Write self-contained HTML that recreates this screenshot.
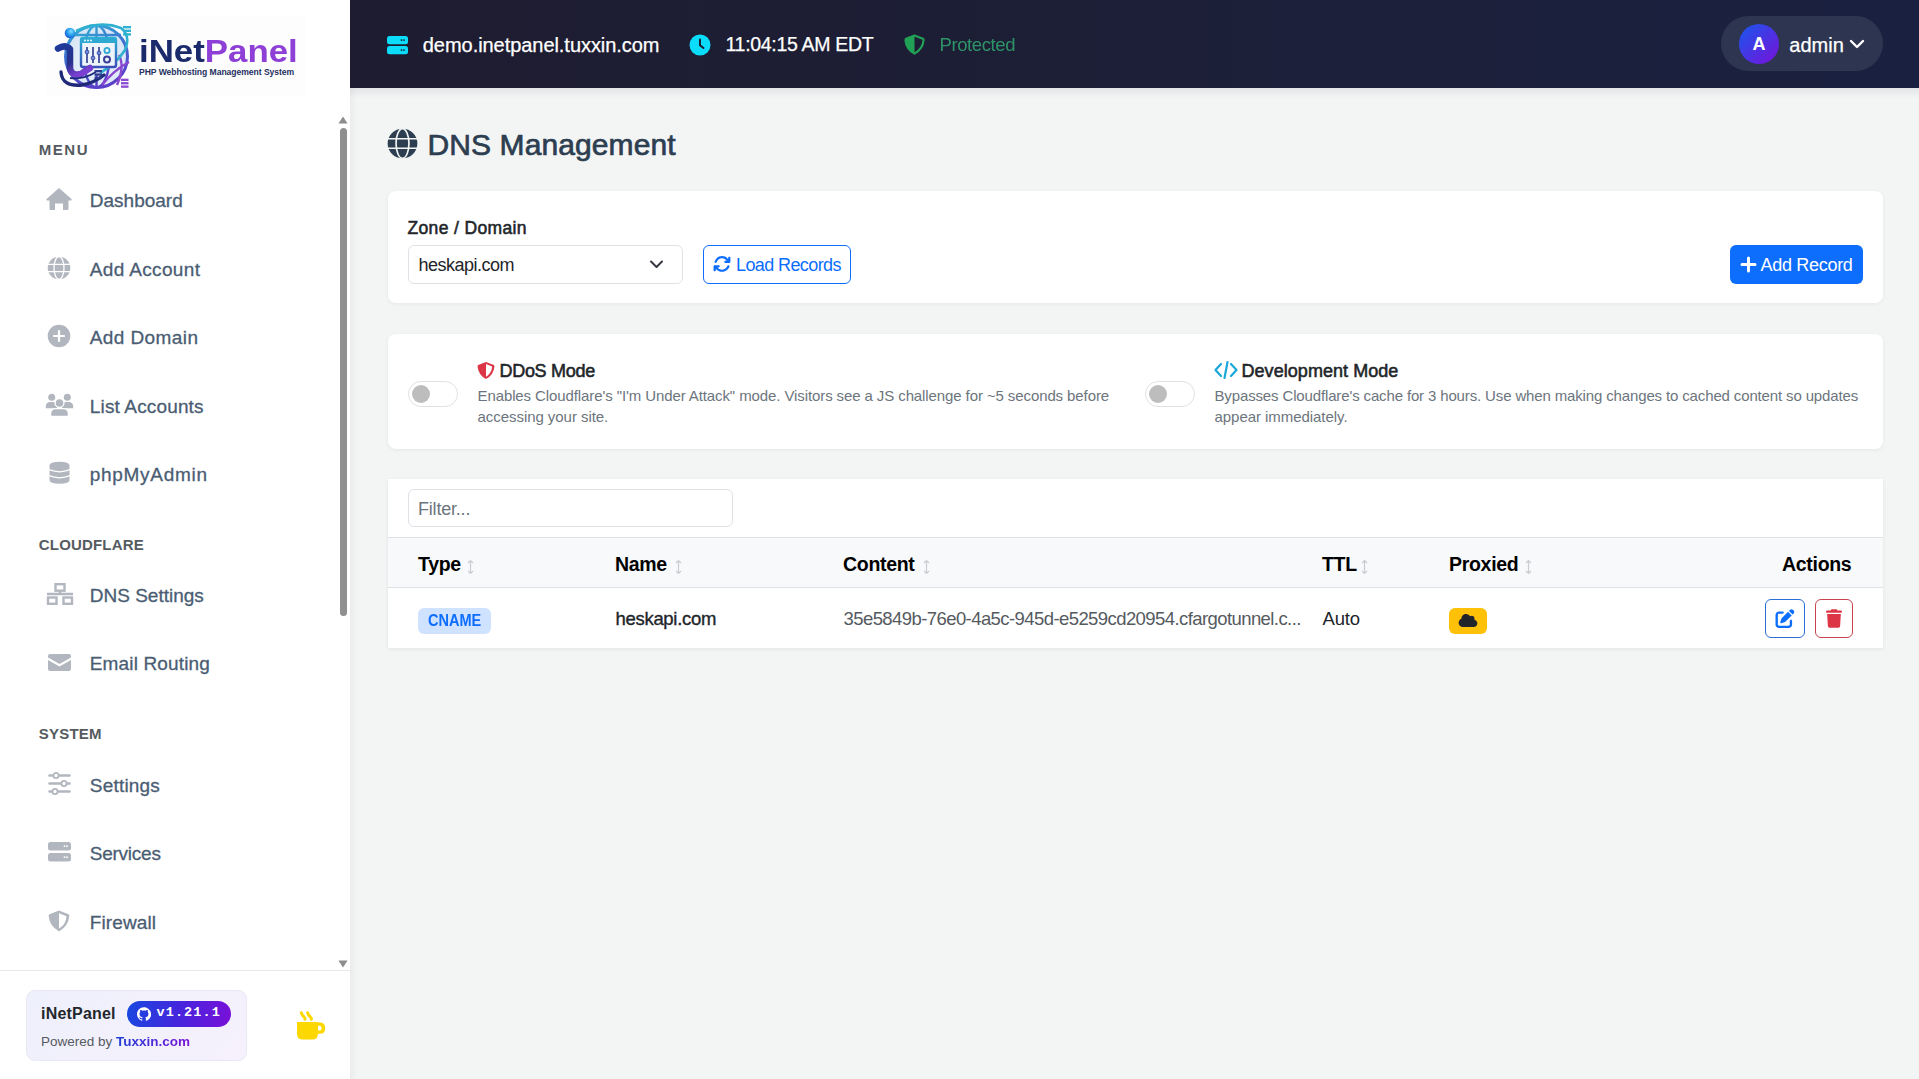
<!DOCTYPE html>
<html><head><meta charset="utf-8"><title>iNetPanel - DNS Management</title>
<style>
html,body{margin:0;padding:0;}
body{width:1919px;height:1079px;overflow:hidden;position:relative;background:#f3f4f4;font-family:"Liberation Sans",sans-serif;}
.a{position:absolute;display:block;}
.t{position:absolute;white-space:nowrap;line-height:1;}
</style></head><body>
<div class="a" style="left:0px;top:0px;width:350px;height:1079px;background:#ffffff;"></div>
<div class="a" style="left:47px;top:16px;width:258px;height:80px;background:#fdfdfe;"></div>
<svg class="a" style="left:50px;top:15px;" width="90" height="80" viewBox="0 0 90 80">
<defs>
<linearGradient id="gRing" x1="0" y1="0" x2="0.3" y2="1"><stop offset="0" stop-color="#2fb6d6"/><stop offset="0.5" stop-color="#3f6fd0"/><stop offset="1" stop-color="#5a3fc8"/></linearGradient>
<linearGradient id="gI" x1="0" y1="0" x2="0.6" y2="1"><stop offset="0" stop-color="#1f3a9a"/><stop offset="0.6" stop-color="#28318a"/><stop offset="1" stop-color="#7a3fd0"/></linearGradient>
<linearGradient id="gWin" x1="0" y1="0" x2="0" y2="1"><stop offset="0" stop-color="#2bb0d4"/><stop offset="1" stop-color="#3a4fb8"/></linearGradient>
<radialGradient id="gFill" cx="0.5" cy="0.55" r="0.55"><stop offset="0" stop-color="#f2f7fd"/><stop offset="1" stop-color="#c6dbf2"/></radialGradient>
<radialGradient id="gDot" cx="0.6" cy="0.35" r="0.7"><stop offset="0" stop-color="#7fe0ff"/><stop offset="0.5" stop-color="#2a9ef0"/><stop offset="1" stop-color="#1a55d0"/></radialGradient>
</defs>
<circle cx="46.5" cy="41.5" r="31" fill="url(#gFill)" opacity="0.75"/>
<circle cx="46.5" cy="41.5" r="31" fill="none" stroke="url(#gRing)" stroke-width="3"/>
<ellipse cx="46.5" cy="41.5" rx="13" ry="31" fill="none" stroke="url(#gRing)" stroke-width="2.4"/>
<path d="M46.5 10.5 V22 M22 20 H71 M46.5 60 V72.5" stroke="url(#gRing)" stroke-width="2.4" fill="none"/>
<path d="M69 40 Q75 52 67 70 M79 47 Q64 55 52 70" stroke="#8a48d0" stroke-width="2.4" fill="none"/>
<path d="M26 16 Q50 5 71 13 Q81 21 75 35 Q66 49 50 58" stroke="#2fb0d0" stroke-width="2.6" fill="none"/>
<rect x="31" y="23" width="35" height="29" rx="2" fill="#eef4fb" stroke="url(#gWin)" stroke-width="2.4"/>
<rect x="31" y="23" width="35" height="5" fill="#2fa8d2"/>
<circle cx="35" cy="25.5" r="0.9" fill="#fff"/><circle cx="38" cy="25.5" r="0.9" fill="#fff"/><circle cx="41" cy="25.5" r="0.9" fill="#fff"/>
<path d="M37 32 V48 M43 32 V48 M49 32 V48" stroke="#2c3a8e" stroke-width="1.6"/>
<circle cx="37" cy="37" r="1.9" fill="#6f8fe0" stroke="#2c3a8e" stroke-width="0.8"/><circle cx="43" cy="43" r="1.9" fill="#6f8fe0" stroke="#2c3a8e" stroke-width="0.8"/><circle cx="49" cy="38" r="1.9" fill="#6f8fe0" stroke="#2c3a8e" stroke-width="0.8"/>
<circle cx="57" cy="35.5" r="2.6" fill="none" stroke="#2fa8d2" stroke-width="1.8"/><circle cx="57" cy="44.5" r="3" fill="none" stroke="#3a3f9a" stroke-width="2"/>
<path d="M8 33.5 Q15 29 20 34 V53 Q21 61 31 59 L40 53" stroke="url(#gI)" stroke-width="6.5" fill="none" stroke-linecap="round" stroke-linejoin="round"/>
<path d="M11 57 Q12 72 32 70 Q44 68 54 60" stroke="#1e2a78" stroke-width="3.4" fill="none" stroke-linecap="round"/>
<path d="M20 63 Q33 65 46 57" stroke="#1e2a78" stroke-width="1.8" fill="none"/>
<circle cx="20" cy="18" r="5.3" fill="url(#gDot)"/>
<rect x="73" y="11" width="8" height="2.4" fill="#31b2d2"/><rect x="73" y="14.6" width="8" height="2.4" fill="#31b2d2"/><rect x="73" y="18.2" width="8" height="2.4" fill="#31b2d2"/>
<rect x="44.5" y="55" width="7.5" height="2.3" fill="#2c3a8e"/><rect x="44.5" y="58.4" width="7.5" height="2.3" fill="#2c3a8e"/><rect x="44.5" y="61.8" width="7.5" height="2.3" fill="#2c3a8e"/>
<rect x="71" y="63.7" width="7.5" height="2.3" fill="#8a4ad0"/><rect x="71" y="67.1" width="7.5" height="2.3" fill="#8a4ad0"/><rect x="71" y="70.5" width="7.5" height="2.3" fill="#8a4ad0"/>
</svg>
<div class="t logo" style="left:139.00px;top:36.26px;font-size:31px;color:#1b2a6b;font-weight:700;transform:scaleX(1.124);transform-origin:0 0;"><span style="color:#1b2a6b">iNet</span><span style="color:#8e3fd6">Panel</span></div>
<div class="t" style="left:139.00px;top:67.72px;font-size:8.6px;color:#26305e;font-weight:700;letter-spacing:-0.05px;">PHP Webhosting Management System</div>
<div class="t" style="left:38.80px;top:142.30px;font-size:15px;color:#555b61;font-weight:700;letter-spacing:1.5px;">MENU</div>
<div class="t" style="left:38.80px;top:536.60px;font-size:15px;color:#555b61;font-weight:700;letter-spacing:0.18px;">CLOUDFLARE</div>
<div class="t" style="left:38.80px;top:725.50px;font-size:15px;color:#555b61;font-weight:700;letter-spacing:0.2px;">SYSTEM</div>
<div class="t" style="left:89.80px;top:190.92px;font-size:19px;color:#4a5d73;-webkit-text-stroke:0.3px #4a5d73;">Dashboard</div>
<svg class="a" style="left:46px;top:187px;" width="26" height="24" viewBox="0 0 26 24"><path d="M13 1 L25.5 12 Q26 13 25 13.5 L22.5 13.5 V22 Q22.5 23 21.5 23 H17 V16.5 H9 V23 H4.5 Q3.5 23 3.5 22 V13.5 H1 Q0 13 0.5 12 Z" fill="#b2b7bf"/></svg>
<div class="t" style="left:89.80px;top:259.72px;font-size:19px;color:#4a5d73;letter-spacing:0.35px;-webkit-text-stroke:0.3px #4a5d73;">Add Account</div>
<svg class="a" style="left:47px;top:256px;" width="24" height="24" viewBox="0 0 24 24"><circle cx="12" cy="12" r="11.3" fill="#b2b7bf"/><ellipse cx="12" cy="12" rx="5" ry="11.3" fill="none" stroke="#fff" stroke-width="1.3"/><path d="M0.5 8.3 H23.5 M0.5 15.7 H23.5" stroke="#fff" stroke-width="1.3"/></svg>
<div class="t" style="left:89.80px;top:327.72px;font-size:19px;color:#4a5d73;letter-spacing:0.4px;-webkit-text-stroke:0.3px #4a5d73;">Add Domain</div>
<svg class="a" style="left:47px;top:324px;" width="24" height="24" viewBox="0 0 24 24"><circle cx="12" cy="12" r="11.3" fill="#b2b7bf"/><path d="M12 7 V17 M7 12 H17" stroke="#fff" stroke-width="2.2" stroke-linecap="round"/></svg>
<div class="t" style="left:89.80px;top:396.72px;font-size:19px;color:#4a5d73;letter-spacing:0.15px;-webkit-text-stroke:0.3px #4a5d73;">List Accounts</div>
<svg class="a" style="left:45px;top:393px;" width="29" height="24" viewBox="0 0 29 24"><circle cx="6.7" cy="4.2" r="3.5" fill="#b2b7bf"/><circle cx="22.3" cy="4.2" r="3.5" fill="#b2b7bf"/><path d="M0.8 15.2 V13.5 Q0.8 9 5.5 9 H8 Q11 9 12 12 V15.2 Z M28.2 15.2 V13.5 Q28.2 9 23.5 9 H21 Q18 9 17 12 V15.2 Z" fill="#b2b7bf"/><circle cx="14.5" cy="10" r="4.4" fill="#b2b7bf" stroke="#fff" stroke-width="1.3"/><path d="M5.6 23.5 V20.8 Q5.6 15.6 10.8 15.6 H18.2 Q23.4 15.6 23.4 20.8 V23.5 Z" fill="#b2b7bf" stroke="#fff" stroke-width="1.3"/></svg>
<div class="t" style="left:89.80px;top:464.92px;font-size:19px;color:#4a5d73;letter-spacing:0.7px;-webkit-text-stroke:0.3px #4a5d73;">phpMyAdmin</div>
<svg class="a" style="left:49px;top:461px;" width="21" height="23" viewBox="0 0 21 23"><path d="M0.5 4.6 Q0.5 0.8 10.5 0.8 Q20.5 0.8 20.5 4.6 V19 Q20.5 22.8 10.5 22.8 Q0.5 22.8 0.5 19 Z" fill="#b2b7bf"/><path d="M0 8.6 Q10.5 13 21 8.6 M0 14.6 Q10.5 19 21 14.6" stroke="#fff" stroke-width="1.3" fill="none"/></svg>
<div class="t" style="left:89.80px;top:585.82px;font-size:19px;color:#4a5d73;-webkit-text-stroke:0.3px #4a5d73;">DNS Settings</div>
<svg class="a" style="left:46px;top:583px;" width="28" height="22" viewBox="0 0 28 22"><rect x="9.5" y="1.2" width="9" height="6.5" fill="none" stroke="#b2b7bf" stroke-width="2.4"/><path d="M14 7.7 V11 M1 11 H27" stroke="#b2b7bf" stroke-width="2.4"/><rect x="2" y="14.5" width="8.5" height="6.3" fill="none" stroke="#b2b7bf" stroke-width="2.4"/><rect x="17.5" y="14.5" width="8.5" height="6.3" fill="none" stroke="#b2b7bf" stroke-width="2.4"/></svg>
<div class="t" style="left:89.80px;top:654.42px;font-size:19px;color:#4a5d73;letter-spacing:0.15px;-webkit-text-stroke:0.3px #4a5d73;">Email Routing</div>
<svg class="a" style="left:48px;top:654px;" width="23" height="17" viewBox="0 0 23 17"><path d="M2 0 H21 Q23 0 23 2 V3.5 L11.5 10 L0 3.5 V2 Q0 0 2 0 Z M0 6 L11.5 12.5 L23 6 V15 Q23 17 21 17 H2 Q0 17 0 15 Z" fill="#b2b7bf"/></svg>
<div class="t" style="left:89.80px;top:775.72px;font-size:19px;color:#4a5d73;letter-spacing:0.2px;-webkit-text-stroke:0.3px #4a5d73;">Settings</div>
<svg class="a" style="left:48px;top:772px;" width="24" height="23" viewBox="0 0 24 23"><path d="M1.5 3.5 H21.5 M1.5 11.5 H21.5 M1.5 19.5 H21.5" stroke="#b2b7bf" stroke-width="2.6" stroke-linecap="round"/><circle cx="8" cy="3.5" r="2.6" fill="#fff" stroke="#b2b7bf" stroke-width="1.8"/><circle cx="16" cy="11.5" r="2.6" fill="#fff" stroke="#b2b7bf" stroke-width="1.8"/><circle cx="7" cy="19.5" r="2.6" fill="#fff" stroke="#b2b7bf" stroke-width="1.8"/></svg>
<div class="t" style="left:89.80px;top:844.22px;font-size:19px;color:#4a5d73;letter-spacing:-0.25px;-webkit-text-stroke:0.3px #4a5d73;">Services</div>
<svg class="a" style="left:48px;top:842px;" width="23" height="20" viewBox="0 0 23 20"><rect x="0" y="0" width="23" height="8.5" rx="2.5" fill="#b2b7bf"/><rect x="0" y="11" width="23" height="8.5" rx="2.5" fill="#b2b7bf"/><circle cx="16.5" cy="4.2" r="0.9" fill="#fff"/><circle cx="19" cy="4.2" r="0.9" fill="#fff"/><circle cx="16.5" cy="15.2" r="0.9" fill="#fff"/><circle cx="19" cy="15.2" r="0.9" fill="#fff"/></svg>
<div class="t" style="left:89.80px;top:912.92px;font-size:19px;color:#4a5d73;letter-spacing:0.1px;-webkit-text-stroke:0.3px #4a5d73;">Firewall</div>
<svg class="a" style="left:48px;top:910px;" width="22" height="22" viewBox="0 0 22 22"><path d="M11 0.5 L20.5 4.3 Q21.5 4.8 21.3 6 Q20.5 16 11 21.5 Q1.5 16 0.7 6 Q0.5 4.8 1.5 4.3 Z" fill="#b2b7bf"/><path d="M11 3.2 L18.5 6.2 Q18 14.5 11 18.6 Z" fill="#fff"/></svg>
<svg class="a" style="left:338px;top:116px;" width="10" height="8" viewBox="0 0 10 8"><path d="M5 0.5 L9.5 7.5 H0.5 Z" fill="#8c8c8c"/></svg>
<div class="a" style="left:340px;top:128px;width:7px;height:488px;background:#8f8f8f;border-radius:4px;"></div>
<svg class="a" style="left:338px;top:960px;" width="10" height="8" viewBox="0 0 10 8"><path d="M0.5 0.5 H9.5 L5 7.5 Z" fill="#8c8c8c"/></svg>
<div class="a" style="left:0px;top:970px;width:350px;height:1px;background:#e6e8eb;"></div>
<div class="a" style="left:26px;top:990px;width:221px;height:71px;background:linear-gradient(135deg,#eef0fc,#f6f1fc);border:1px solid #e9e8f6;border-radius:9px;box-sizing:border-box;"></div>
<div class="t" style="left:41.00px;top:1005.96px;font-size:16px;color:#23272b;font-weight:700;letter-spacing:0.2px;">iNetPanel</div>
<div class="a" style="left:127px;top:1001px;width:104px;height:26px;background:linear-gradient(100deg,#1848e0,#4a22dc 55%,#7a10d8);border-radius:13px;"></div>
<svg class="a" style="left:137px;top:1006.5px;" width="14" height="14" viewBox="0 0 16 16"><path fill="#fff" d="M8 0.2C3.6 0.2 0 3.8 0 8.2c0 3.5 2.3 6.5 5.5 7.6.4.1.5-.2.5-.4v-1.4c-2.2.5-2.7-1-2.7-1-.4-.9-.9-1.2-.9-1.2-.7-.5.1-.5.1-.5.8.1 1.2.8 1.2.8.7 1.2 1.9.9 2.3.7.1-.5.3-.9.5-1.1-1.8-.2-3.6-.9-3.6-4 0-.9.3-1.6.8-2.1-.1-.2-.4-1 .1-2.1 0 0 .7-.2 2.2.8.6-.2 1.3-.3 2-.3s1.4.1 2 .3c1.5-1 2.2-.8 2.2-.8.4 1.1.2 1.9.1 2.1.5.6.8 1.3.8 2.1 0 3.1-1.9 3.8-3.6 4 .3.3.6.8.6 1.5v2.2c0 .2.1.5.6.4 3.2-1.1 5.5-4.1 5.5-7.6C16 3.8 12.4 0.2 8 0.2z"/></svg>
<div class="t" style="left:156.50px;top:1005.57px;font-size:13.5px;color:#ffffff;font-weight:700;letter-spacing:1.1px;font-family:'Liberation Mono',monospace;">v1.21.1</div>
<div class="t" style="left:41.00px;top:1034.57px;font-size:13.5px;color:#555a60;">Powered by <b style="background:linear-gradient(90deg,#1d3fd8,#7a14d6);-webkit-background-clip:text;background-clip:text;color:transparent">Tuxxin.com</b></div>
<svg class="a" style="left:285px;top:1000px;" width="50" height="50" viewBox="0 0 50 50"><path d="M16.3 12.8 Q16.8 15.2 19.3 17.2 Q20.3 18.2 20 19.2 M22.6 12.8 Q23.1 15.2 25.6 17.2 Q26.6 18.2 26.3 19.2" stroke="#fcd800" stroke-width="3" fill="none" stroke-linecap="round"/><path d="M12 22 H33 V34 Q33 39.6 27.4 39.6 H17.6 Q12 39.6 12 34 Z" fill="#fcd800"/><path d="M32 22.5 H35 Q40.2 22.5 40.2 28.2 Q40.2 33.8 35 33.8 H32 V30.6 H34.6 Q36.6 30.6 36.6 28.2 Q36.6 25.7 34.6 25.7 H32 Z" fill="#fcd800"/></svg>
<div class="a" style="left:350px;top:0px;width:1569px;height:88px;background:linear-gradient(90deg,#1e1c30 0%,#1c1f38 55%,#1a2140 100%);"></div>
<div class="a" style="left:350px;top:88px;width:1569px;height:10px;background:linear-gradient(#e2e5e6,rgba(243,244,244,0));"></div>
<div class="a" style="left:350px;top:88px;width:7px;height:991px;background:linear-gradient(90deg,rgba(0,0,0,0.035),rgba(0,0,0,0));"></div>
<svg class="a" style="left:387px;top:35.6px;" width="21" height="19" viewBox="0 0 21 19"><rect x="0" y="0" width="21" height="8.3" rx="2.5" fill="#0adcfa"/><rect x="0" y="10" width="21" height="8.3" rx="2.5" fill="#0adcfa"/><circle cx="14.5" cy="4.1" r="0.9" fill="#1e1c30"/><circle cx="17" cy="4.1" r="0.9" fill="#1e1c30"/><circle cx="14.5" cy="14.1" r="0.9" fill="#1e1c30"/><circle cx="17" cy="14.1" r="0.9" fill="#1e1c30"/></svg>
<div class="t" style="left:422.80px;top:35.07px;font-size:20px;color:#ffffff;letter-spacing:-0.05px;-webkit-text-stroke:0.25px #fff;">demo.inetpanel.tuxxin.com</div>
<svg class="a" style="left:689px;top:34px;" width="22" height="22" viewBox="0 0 22 22"><circle cx="11" cy="11" r="10.5" fill="#0adcfa"/><path d="M11 5.5 V11.3 L14.5 14" stroke="#1e1c30" stroke-width="2" fill="none" stroke-linecap="round"/></svg>
<div class="t" style="left:725.50px;top:35.49px;font-size:19.5px;color:#ffffff;letter-spacing:-0.3px;-webkit-text-stroke:0.25px #fff;">11:04:15 AM EDT</div>
<svg class="a" style="left:904px;top:34px;" width="21" height="21" viewBox="0 0 22 22"><path d="M11 1.5 L19.8 5 Q20.6 5.4 20.5 6.4 Q19.7 15.6 11 20.6 Q2.3 15.6 1.5 6.4 Q1.4 5.4 2.2 5 Z" fill="none" stroke="#21a155" stroke-width="2.2" stroke-linejoin="round"/><path d="M11 1.5 V20.6 Q2.3 15.6 1.5 6.4 Q1.4 5.4 2.2 5 Z" fill="#21a155"/></svg>
<div class="t" style="left:939.50px;top:36.34px;font-size:18.5px;color:#30a06c;letter-spacing:-0.4px;opacity:0.9;">Protected</div>
<div class="a" style="left:1721px;top:16px;width:162px;height:55px;background:#2e3550;border-radius:28px;"></div>
<div class="a" style="left:1739px;top:24px;width:40px;height:40px;background:linear-gradient(135deg,#1658ee,#7a10d8);border-radius:50%;"></div>
<div class="t" style="left:1752.50px;top:34.86px;font-size:18px;color:#ffffff;font-weight:700;">A</div>
<div class="t" style="left:1789.30px;top:34.77px;font-size:20px;color:#ffffff;-webkit-text-stroke:0.25px #fff;">admin</div>
<svg class="a" style="left:1849px;top:39px;" width="16" height="11" viewBox="0 0 16 11"><path d="M2 2 L8 8 L14 2" stroke="#fff" stroke-width="2.4" fill="none" stroke-linecap="round" stroke-linejoin="round"/></svg>
<svg class="a" style="left:387px;top:128px;" width="31" height="31" viewBox="0 0 24 24"><circle cx="12" cy="12" r="11.5" fill="#2c3e50"/><ellipse cx="12" cy="12" rx="5" ry="11.5" fill="none" stroke="#f3f4f4" stroke-width="1.3"/><path d="M0.5 8.3 H23.5 M0.5 15.7 H23.5" stroke="#f3f4f4" stroke-width="1.3"/></svg>
<div class="t" style="left:427.50px;top:129.80px;font-size:30px;color:#2c3e50;letter-spacing:0.1px;-webkit-text-stroke:0.7px #2c3e50;">DNS Management</div>
<div class="a" style="left:388px;top:191px;width:1495px;height:112px;background:#fff;border-radius:8px;box-shadow:0 1px 4px rgba(0,0,0,0.06);"></div>
<div class="t" style="left:407.50px;top:219.69px;font-size:17.5px;color:#212529;letter-spacing:0.35px;-webkit-text-stroke:0.55px #212529;">Zone / Domain</div>
<div class="a" style="left:408px;top:245px;width:275px;height:39px;border:1px solid #dee2e6;border-radius:6px;box-sizing:border-box;background:#fff;"></div>
<div class="t" style="left:418.50px;top:255.76px;font-size:18px;color:#212529;letter-spacing:-0.5px;">heskapi.com</div>
<svg class="a" style="left:649px;top:259px;" width="15" height="11" viewBox="0 0 15 11"><path d="M2 2.5 L7.5 8 L13 2.5" stroke="#343a40" stroke-width="2" fill="none" stroke-linecap="round" stroke-linejoin="round"/></svg>
<div class="a" style="left:703px;top:245px;width:148px;height:39px;border:1px solid #0d6efd;border-radius:6px;box-sizing:border-box;"></div>
<svg class="a" style="left:713px;top:255px;" width="18" height="18" viewBox="0 0 512 512"><path fill="#0d6efd" d="M105.1 202.6c7.7-21.8 20.2-42.3 37.8-59.8c62.5-62.5 163.8-62.5 226.3 0L386.3 160H352c-17.7 0-32 14.3-32 32s14.3 32 32 32H463.5c0 0 0 0 0 0h.4c17.7 0 32-14.3 32-32V80c0-17.7-14.3-32-32-32s-32 14.3-32 32v35.2L414.4 97.6c-87.5-87.5-229.3-87.5-316.8 0C73.2 122 55.6 150.7 44.8 181.4c-5.9 16.7 2.9 34.9 19.5 40.8s34.9-2.9 40.8-19.5zM39 289.3c-5 1.5-9.8 4.2-13.7 8.2c-4 4-6.7 8.8-8.1 14c-.3 1.2-.6 2.5-.8 3.8c-.3 1.7-.4 3.4-.4 5.1V432c0 17.7 14.3 32 32 32s32-14.3 32-32V396.9l17.6 17.5 0 0c87.5 87.4 229.3 87.4 316.7 0c24.4-24.4 42.1-53.1 52.9-83.7c5.9-16.7-2.9-34.9-19.5-40.8s-34.9 2.9-40.8 19.5c-7.7 21.8-20.2 42.3-37.8 59.8c-62.5 62.5-163.8 62.5-226.3 0l-.1-.1L125.6 352H160c17.7 0 32-14.3 32-32s-14.3-32-32-32H48.4c-1.6 0-3.2 .1-4.8 .3s-3.1 .5-4.6 1z"/></svg>
<div class="t" style="left:736.00px;top:255.76px;font-size:18px;color:#0d6efd;letter-spacing:-0.6px;">Load Records</div>
<div class="a" style="left:1730px;top:245px;width:133px;height:39px;background:#0d6efd;border-radius:6px;"></div>
<svg class="a" style="left:1740px;top:256px;" width="17" height="17" viewBox="0 0 17 17"><path d="M8.5 2 V15 M2 8.5 H15" stroke="#fff" stroke-width="3" stroke-linecap="round"/></svg>
<div class="t" style="left:1760.50px;top:255.76px;font-size:18px;color:#ffffff;letter-spacing:-0.3px;">Add Record</div>
<div class="a" style="left:388px;top:334px;width:1495px;height:115px;background:#fff;border-radius:8px;box-shadow:0 1px 4px rgba(0,0,0,0.06);"></div>
<div class="a" style="left:408px;top:381px;width:50px;height:26px;border:1px solid #dee2e6;border-radius:13px;box-sizing:border-box;background:#fff;"></div>
<div class="a" style="left:412px;top:385px;width:18px;height:18px;background:#bdbdbd;border-radius:50%;"></div>
<svg class="a" style="left:477px;top:361px;" width="18" height="19" viewBox="0 0 22 22"><path d="M11 0.5 L20.5 4.3 Q21.5 4.8 21.3 6 Q20.5 16 11 21.5 Q1.5 16 0.7 6 Q0.5 4.8 1.5 4.3 Z" fill="#dc3545"/><path d="M11 3.2 L18.5 6.2 Q18 14.5 11 18.6 Z" fill="#fff"/></svg>
<div class="t" style="left:499.50px;top:362.06px;font-size:18px;color:#212529;letter-spacing:-0.3px;-webkit-text-stroke:0.55px #212529;">DDoS Mode</div>
<div class="t" style="left:477.50px;top:387.80px;font-size:15px;color:#6c757d;letter-spacing:-0.1px;">Enables Cloudflare's "I'm Under Attack" mode. Visitors see a JS challenge for ~5 seconds before</div>
<div class="t" style="left:477.50px;top:409.30px;font-size:15px;color:#6c757d;letter-spacing:-0.05px;">accessing your site.</div>
<div class="a" style="left:1145px;top:381px;width:50px;height:26px;border:1px solid #dee2e6;border-radius:13px;box-sizing:border-box;background:#fff;"></div>
<div class="a" style="left:1149px;top:385px;width:18px;height:18px;background:#bdbdbd;border-radius:50%;"></div>
<svg class="a" style="left:1214px;top:361px;" width="24" height="18" viewBox="0 0 24 18"><path d="M7 3 L1.5 9 L7 15 M17 3 L22.5 9 L17 15 M13.5 1 L10.5 17" stroke="#1ba8d8" stroke-width="2.2" fill="none" stroke-linecap="round" stroke-linejoin="round"/></svg>
<div class="t" style="left:1241.50px;top:362.06px;font-size:18px;color:#212529;letter-spacing:0.05px;-webkit-text-stroke:0.55px #212529;">Development Mode</div>
<div class="t" style="left:1214.50px;top:387.80px;font-size:15px;color:#6c757d;letter-spacing:-0.14px;">Bypasses Cloudflare's cache for 3 hours. Use when making changes to cached content so updates</div>
<div class="t" style="left:1214.50px;top:409.30px;font-size:15px;color:#6c757d;letter-spacing:-0.05px;">appear immediately.</div>
<div class="a" style="left:388px;top:479px;width:1495px;height:169px;background:#fff;box-shadow:0 1px 4px rgba(0,0,0,0.07);"></div>
<div class="a" style="left:408px;top:489px;width:325px;height:38px;border:1px solid #dee2e6;border-radius:6px;box-sizing:border-box;background:#fff;"></div>
<div class="t" style="left:418.00px;top:499.76px;font-size:18px;color:#6c757d;letter-spacing:-0.2px;">Filter...</div>
<div class="a" style="left:388px;top:537px;width:1495px;height:51px;background:#f8f9fa;border-top:1px solid #dee2e6;border-bottom:1px solid #dee2e6;box-sizing:border-box;"></div>
<div class="t" style="left:418.00px;top:554.99px;font-size:19.5px;color:#000000;font-weight:700;letter-spacing:-0.3px;">Type</div>
<svg class="a" style="left:467px;top:559px;" width="7" height="16" viewBox="0 0 7 16"><path d="M3.5 1.5 V14.5 M1 4 L3.5 1.5 L6 4 M1 12 L3.5 14.5 L6 12" stroke="#c9cdd1" stroke-width="1.2" fill="none"/></svg>
<div class="t" style="left:615.00px;top:554.99px;font-size:19.5px;color:#000000;font-weight:700;letter-spacing:-0.3px;">Name</div>
<svg class="a" style="left:675px;top:559px;" width="7" height="16" viewBox="0 0 7 16"><path d="M3.5 1.5 V14.5 M1 4 L3.5 1.5 L6 4 M1 12 L3.5 14.5 L6 12" stroke="#c9cdd1" stroke-width="1.2" fill="none"/></svg>
<div class="t" style="left:843.00px;top:554.99px;font-size:19.5px;color:#000000;font-weight:700;letter-spacing:-0.3px;">Content</div>
<svg class="a" style="left:923px;top:559px;" width="7" height="16" viewBox="0 0 7 16"><path d="M3.5 1.5 V14.5 M1 4 L3.5 1.5 L6 4 M1 12 L3.5 14.5 L6 12" stroke="#c9cdd1" stroke-width="1.2" fill="none"/></svg>
<div class="t" style="left:1322.00px;top:554.99px;font-size:19.5px;color:#000000;font-weight:700;letter-spacing:-0.3px;">TTL</div>
<svg class="a" style="left:1361px;top:559px;" width="7" height="16" viewBox="0 0 7 16"><path d="M3.5 1.5 V14.5 M1 4 L3.5 1.5 L6 4 M1 12 L3.5 14.5 L6 12" stroke="#c9cdd1" stroke-width="1.2" fill="none"/></svg>
<div class="t" style="left:1449.00px;top:554.99px;font-size:19.5px;color:#000000;font-weight:700;letter-spacing:-0.3px;">Proxied</div>
<svg class="a" style="left:1525px;top:559px;" width="7" height="16" viewBox="0 0 7 16"><path d="M3.5 1.5 V14.5 M1 4 L3.5 1.5 L6 4 M1 12 L3.5 14.5 L6 12" stroke="#c9cdd1" stroke-width="1.2" fill="none"/></svg>
<div class="t" style="left:1782.00px;top:554.99px;font-size:19.5px;color:#000000;font-weight:700;letter-spacing:-0.3px;">Actions</div>
<div class="a" style="left:418px;top:608px;width:73px;height:26px;background:#cfe2ff;border-radius:6px;"></div>
<div class="t" style="left:427.80px;top:612.33px;font-size:16.5px;color:#0d6efd;font-weight:700;transform:scaleX(0.88);transform-origin:0 0;">CNAME</div>
<div class="t" style="left:615.50px;top:610.14px;font-size:18.5px;color:#212529;letter-spacing:-0.3px;-webkit-text-stroke:0.35px #212529;">heskapi.com</div>
<div class="t" style="left:843.50px;top:610.14px;font-size:18.5px;color:#555a60;letter-spacing:-0.58px;">35e5849b-76e0-4a5c-945d-e5259cd20954.cfargotunnel.c...</div>
<div class="t" style="left:1322.50px;top:610.14px;font-size:18.5px;color:#212529;letter-spacing:-0.2px;">Auto</div>
<div class="a" style="left:1449px;top:608px;width:38px;height:26px;background:#ffc107;border-radius:6px;"></div>
<svg class="a" style="left:1457px;top:613px;" width="22" height="15" viewBox="0 0 640 512"><path fill="#212529" d="M0 336c0 79.5 64.5 144 144 144H512c70.7 0 128-57.3 128-128c0-61.9-44-113.6-102.4-125.4c4.1-10.7 6.4-22.4 6.4-34.6c0-53-43-96-96-96c-19.7 0-38.1 6-53.3 16.2C367 64.2 315.3 32 256 32C167.6 32 96 103.6 96 192c0 2.7 .1 5.4 .2 8.1C40.2 219.8 0 273.2 0 336z"/></svg>
<div class="a" style="left:1765px;top:599px;width:40px;height:39px;border:1px solid #2a6ed8;border-radius:6px;box-sizing:border-box;"></div>
<svg class="a" style="left:1775px;top:609px;" width="20" height="19" viewBox="0 0 512 512"><path fill="#0d6efd" d="M471.6 21.7c-21.9-21.9-57.3-21.9-79.2 0L362.3 51.7l97.9 97.9 30.1-30.1c21.9-21.9 21.9-57.3 0-79.2L471.6 21.7zm-299.2 220c-6.1 6.1-10.8 13.6-13.5 21.9l-29.6 88.8c-2.9 8.6-.6 18.1 5.8 24.6s15.9 8.7 24.6 5.8l88.8-29.6c8.2-2.7 15.7-7.4 21.9-13.5L437.7 172.3 339.7 74.3 172.4 241.7zM96 64C43 64 0 107 0 160V416c0 53 43 96 96 96H352c53 0 96-43 96-96V320c0-17.7-14.3-32-32-32s-32 14.3-32 32v96c0 17.7-14.3 32-32 32H96c-17.7 0-32-14.3-32-32V160c0-17.7 14.3-32 32-32h96c17.7 0 32-14.3 32-32s-14.3-32-32-32H96z"/></svg>
<div class="a" style="left:1815px;top:599px;width:38px;height:39px;border:1px solid #c9434f;border-radius:6px;box-sizing:border-box;"></div>
<svg class="a" style="left:1826px;top:609px;" width="16" height="19" viewBox="0 0 448 512"><path fill="#dc3545" d="M135.2 17.7L128 32H32C14.3 32 0 46.3 0 64S14.3 96 32 96H416c17.7 0 32-14.3 32-32s-14.3-32-32-32H320l-7.2-14.3C307.4 6.8 296.3 0 284.2 0H163.8c-12.1 0-23.2 6.8-28.6 17.7zM416 128H32L53.2 467c1.6 25.3 22.6 45 47.9 45H346.9c25.3 0 46.3-19.7 47.9-45L416 128z"/></svg>
</body></html>
